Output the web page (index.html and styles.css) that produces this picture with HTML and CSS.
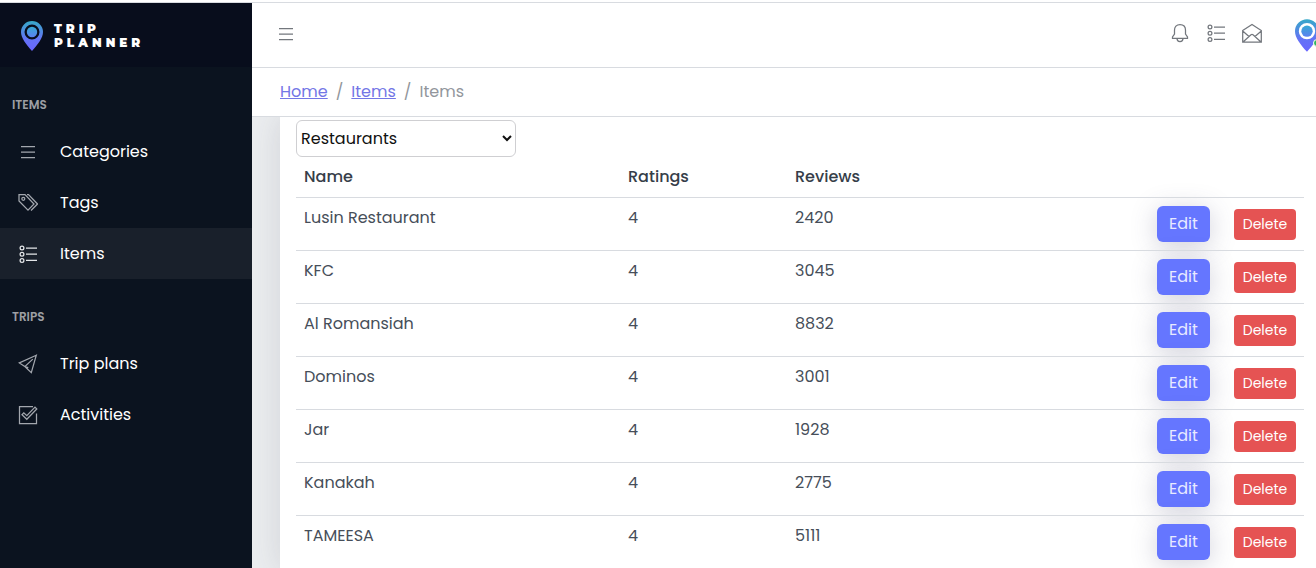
FILE: index.html
```html
<!DOCTYPE html>
<html lang="en">
<head>
<meta charset="utf-8">
<title>Trip Planner – Items</title>
<link rel="stylesheet" href="styles.css">
</head>
<body>
<svg class="defs" aria-hidden="true">
  <defs>
    <linearGradient id="pin-fill" x1="0" y1="0" x2="0" y2="1">
      <stop offset="0" stop-color="#36a9c8"/>
      <stop offset=".6" stop-color="#6473f5"/>
      <stop offset="1" stop-color="#6a66ff"/>
    </linearGradient>
    <linearGradient id="dot-fill" x1="0" y1="0" x2="0" y2="1">
      <stop offset="0" stop-color="#36a9d4"/>
      <stop offset="1" stop-color="#5c80f0"/>
    </linearGradient>
    <symbol id="pin" viewBox="0 0 22 30">
      <path fill="url(#pin-fill)" fill-rule="evenodd" d="M11 0A11 11 0 0 0 0 11c0 6 5 12 11 19 6-7 11-13 11-19A11 11 0 0 0 11 0zm0 3.500a7.500 7.500 0 1 1 0 15 7.500 7.500 0 0 1 0-15z"/>
      <circle cx="11" cy="11" r="5.200" fill="url(#dot-fill)"/>
    </symbol>
    <symbol id="menu" viewBox="0 0 20 20"><path d="M3 4.500h14M3 10h14M3 15.500h14"/></symbol>
    <symbol id="list" viewBox="0 0 20 20"><circle cx="4" cy="4" r="1.900"/><circle cx="4" cy="10.200" r="1.900"/><circle cx="4" cy="16.400" r="1.900"/><path d="M8 4.200h11M8 10.200h11M8 16.400h11"/></symbol>
    <symbol id="tags" viewBox="0 0 20 20"><path d="M1 1.500v6.500l9 9.200 6-6.200-9-9.500z"/><circle cx="5.300" cy="5.800" r="1.500"/><path d="M9 1.500h1.500l9 9.500-6.500 6.500"/></symbol>
    <symbol id="send" viewBox="0 0 20 20"><path d="M18.300 1.200L1.300 8.900l5.500 3.700 6.500 6zM6.800 12.600l8-7.500M6.800 12.600l3.500 1"/></symbol>
    <symbol id="task" viewBox="0 0 20 20"><path d="M15 1.500H1.500v17h17V8.500"/><path d="M4 9.700l1.800-1.900 3 2.900 8.200-8.600L18.800 4 8.800 14.300z"/></symbol>
    <symbol id="bell" viewBox="0 0 20 20"><path d="M10 1.500c-3.600 0-5.500 2.500-5.500 5.500v4L2.500 14v1.300h15V14L15.500 11V7c0-3-1.900-5.500-5.500-5.500zM7 15.500a3 3 0 0 0 6 0"/></symbol>
    <symbol id="mail" viewBox="0 0 20 20"><path d="M.700 7.500L10 1.500l9.300 6v11.700H.700zM.700 8l6.300 5.500M19.300 8L13 13.500M1 19l8-7.200q1-.700 2 0L19 19"/></symbol>
  </defs>
</svg>
<div class="app">
  <aside class="sidebar">
    <div class="brand">
      <svg class="brand-pin"><use href="#pin"/></svg>
      <span class="brand-name">TRIP<br>PLANNER</span>
    </div>
    <nav class="nav">
      <h2 class="nav-title">ITEMS</h2>
      <a class="nav-link" href="#"><svg class="icon"><use href="#menu"/></svg>Categories</a>
      <a class="nav-link" href="#"><svg class="icon"><use href="#tags"/></svg>Tags</a>
      <a class="nav-link active" href="#"><svg class="icon"><use href="#list"/></svg>Items</a>
      <h2 class="nav-title">TRIPS</h2>
      <a class="nav-link" href="#"><svg class="icon"><use href="#send"/></svg>Trip plans</a>
      <a class="nav-link" href="#"><svg class="icon"><use href="#task"/></svg>Activities</a>
    </nav>
  </aside>
  <div class="page">
    <header class="header">
      <button class="icon-button" type="button" aria-label="Toggle menu"><svg class="icon"><use href="#menu"/></svg></button>
      <div class="tools">
        <button class="icon-button" type="button" aria-label="Notifications"><svg class="icon"><use href="#bell"/></svg></button>
        <button class="icon-button" type="button" aria-label="Tasks"><svg class="icon"><use href="#list"/></svg></button>
        <button class="icon-button" type="button" aria-label="Messages"><svg class="icon"><use href="#mail"/></svg></button>
        <button class="avatar" type="button" aria-label="Account"><svg class="avatar-pin"><use href="#pin"/></svg><span class="status"></span></button>
      </div>
    </header>
    <nav class="breadcrumb" aria-label="Breadcrumb">
      <a class="crumb" href="#">Home</a><span>/</span><a class="crumb" href="#">Items</a><span>/</span><span>Items</span>
    </nav>
    <main class="content">
      <section class="card">
        <select class="filter" aria-label="Category"><option>Restaurants</option></select>
        <table class="table">
          <colgroup><col class="col-name"><col class="col-ratings"><col><col class="col-action"><col class="col-action"></colgroup>
          <thead><tr><th>Name</th><th>Ratings</th><th>Reviews</th><th></th><th></th></tr></thead>
          <tbody>
            <tr><td>Lusin Restaurant</td><td>4</td><td>2420</td><td><button class="edit" type="button">Edit</button></td><td><button class="delete" type="button">Delete</button></td></tr>
            <tr><td>KFC</td><td>4</td><td>3045</td><td><button class="edit" type="button">Edit</button></td><td><button class="delete" type="button">Delete</button></td></tr>
            <tr><td>Al Romansiah</td><td>4</td><td>8832</td><td><button class="edit" type="button">Edit</button></td><td><button class="delete" type="button">Delete</button></td></tr>
            <tr><td>Dominos</td><td>4</td><td>3001</td><td><button class="edit" type="button">Edit</button></td><td><button class="delete" type="button">Delete</button></td></tr>
            <tr><td>Jar</td><td>4</td><td>1928</td><td><button class="edit" type="button">Edit</button></td><td><button class="delete" type="button">Delete</button></td></tr>
            <tr><td>Kanakah</td><td>4</td><td>2775</td><td><button class="edit" type="button">Edit</button></td><td><button class="delete" type="button">Delete</button></td></tr>
            <tr><td>TAMEESA</td><td>4</td><td>5111</td><td><button class="edit" type="button">Edit</button></td><td><button class="delete" type="button">Delete</button></td></tr>
          </tbody>
        </table>
      </section>
    </main>
  </div>
</div>
</body>
</html>
```
FILE: styles.css
```css
* { box-sizing: border-box; }

body {
  margin: 0;
  padding-top: 2px;
  font: 16px/24px Poppins, Inter, "Open Sans", sans-serif;
  color: #464e59;
  background: #fff;
}

button, select { font: inherit; }
.defs { position: absolute; width: 0; height: 0; }

.app {
  display: flex;
  min-height: calc(100vh - 2px);
  border-top: 1px solid #d8dbe0;
  overflow: hidden;
}

.icon {
  width: 20px;
  height: 20px;
  fill: none;
  stroke: currentColor;
  stroke-width: 1.25;
  flex: none;
}

/* Sidebar */
.sidebar {
  flex: 0 0 252px;
  background: #0b131f;
}

.brand {
  display: flex;
  align-items: center;
  gap: 11px;
  height: 64px;
  padding-left: 21px;
  padding-top: 1px;
  background: #080d1c;
  color: #fff;
}

.brand-pin { width: 22px; height: 30px; }

.brand-name {
  font: 900 12px/14px Montserrat, Inter, sans-serif;
  letter-spacing: 4px;
}

.nav-title {
  margin: 0;
  padding: 28px 12px 12px;
  font-size: 12px;
  line-height: 19px;
  font-weight: 600;
  color: #9d9fa3;
}

.nav-link {
  display: flex;
  align-items: center;
  gap: 22px;
  height: 51px;
  padding: 0 18px;
  color: #fff;
  text-decoration: none;
}

.nav-link .icon { color: #a3a7ae; }
.nav-link.active { background: #19202b; }
.nav-link.active .icon { color: #e4e6e9; }

/* Page header */
.page {
  flex: 1;
  min-width: 0;
  display: flex;
  flex-direction: column;
}

.header {
  display: flex;
  align-items: center;
  justify-content: space-between;
  height: 65px;
  padding-left: 24px;
  border-bottom: 1px solid #d8dbe0;
}

.tools { display: flex; align-items: center; }

.icon-button {
  display: flex;
  padding: 8px;
  margin-top: -4px;
  border: 0;
  background: none;
  color: #73777d;
}

.header > .icon-button { padding: 0; margin-top: -2px; }

.avatar {
  position: relative;
  display: flex;
  margin-left: 25px;
  margin-right: -3px;
  padding: 0;
  border: 0;
  background: none;
}

.avatar-pin { width: 24px; height: 33px; }

.status {
  position: absolute;
  right: -2px;
  bottom: 5px;
  width: 8px;
  height: 8px;
  border: 1px solid #fff;
  border-radius: 50%;
  background: #2eb85c;
}

.breadcrumb {
  display: flex;
  align-items: center;
  gap: 8px;
  height: 49px;
  padding: 0 28px;
  border-bottom: 1px solid #d8dbe0;
  color: #92969c;
}

.crumb { color: #7376e6; }

/* Items card */
.content {
  flex: 1;
  display: flex;
  padding-left: 28px;
  background: #ebedef;
  overflow: hidden;
}

.card {
  flex: 1;
  padding: 3px 12px 0 16px;
  background: #fff;
  box-shadow: 0 0 30px rgba(60, 60, 90, .15);
}

.filter {
  display: block;
  width: 220px;
  height: 37px;
  padding: 0;
  border: 1px solid #cfcfd2;
  border-radius: 6px;
  background: #fff;
  color: #111;
}

.table {
  width: 100%;
  table-layout: fixed;
  border-collapse: collapse;
}

.col-name { width: 324px; }
.col-ratings { width: 167px; }
.col-action { width: 78px; }
.col-action:nth-last-child(2) { width: 77px; }

.table th, .table td {
  padding: 8px;
  text-align: left;
  vertical-align: top;
  border-bottom: 1px solid #d8dbe0;
}

.table th { height: 40px; padding-bottom: 7px; font-weight: 500; color: #363e49; }
.table td { height: 53px; padding-bottom: 0; }

.edit, .delete {
  display: block;
  padding: 0;
  border: 0;
  color: #fff;
}

.edit {
  width: 53px;
  height: 36px;
  border-radius: 6px;
  background: #6576ff;
  color: #e8eaff;
  box-shadow: 0 4px 26px rgba(70, 70, 110, .25);
}

.delete {
  width: 62px;
  height: 31px;
  margin-top: 3px;
  border-radius: 4px;
  background: #e55353;
  font-size: 14px;
}
```
